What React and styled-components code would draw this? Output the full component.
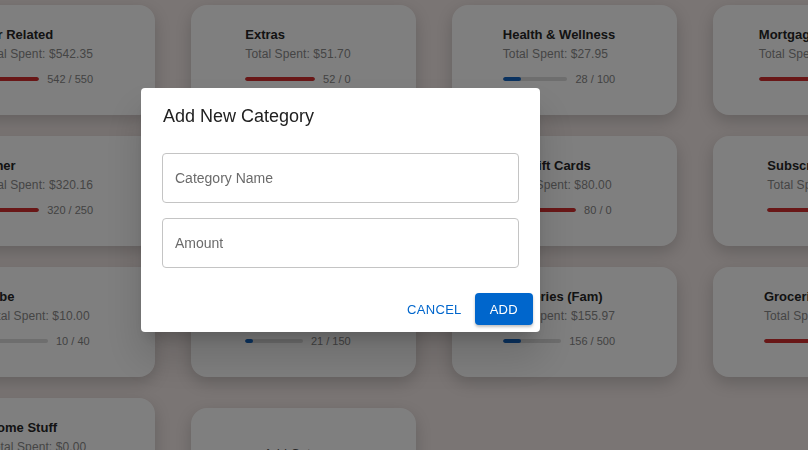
import React from "react";
import styled, { createGlobalStyle } from "styled-components";

const GlobalStyle = createGlobalStyle`
    html, body {
        margin: 0;
        padding: 0;
        background: #f4eae8;
        overflow: hidden;
        font-family: "Liberation Sans", Arial, sans-serif;
    }
`;

const Page = styled.div`
    width: 808px;
    height: 450px;
    overflow: hidden;
`;

const Grid = styled.div`
    display: grid;
    grid-template-columns: repeat(4, 225px);
    column-gap: 36px;
    row-gap: 21px;
    margin-left: -70px;
    padding-top: 5px;
`;

const Card = styled.div`
    height: 110px;
    box-sizing: border-box;
    background: #ffffff;
    border-radius: 16px;
    box-shadow: 0 6px 16px rgba(0, 0, 0, 0.18);
    display: flex;
    justify-content: center;
    padding: 22px 11px 0 0;
`;

const Content = styled.div`
    display: flex;
    flex-direction: column;
`;

const Title = styled.div`
    font-size: 13px;
    font-weight: bold;
    line-height: 16px;
    color: #262626;
    white-space: nowrap;
`;

const Spent = styled.div`
    margin-top: 3px;
    font-size: 12px;
    line-height: 16px;
    color: #8a8a8a;
    letter-spacing: 0.1px;
    white-space: nowrap;
`;

const ProgressRow = styled.div`
    margin-top: 9px;
    display: flex;
    align-items: center;
    gap: 8px;
    height: 16px;
`;

const Track = styled.div`
    flex: 1;
    height: 4px;
    border-radius: 2px;
    background: #dcdcdc;
    overflow: hidden;
`;

const Fill = styled.div`
    height: 100%;
    border-radius: 2px;
    background: ${(p) => (p.$over ? "#d32f2f" : "#1565c0")};
`;

const Count = styled.span`
    font-size: 11px;
    color: #858585;
    white-space: nowrap;
`;

const AddCard = styled(Card)`
    margin-top: 10px;
    padding: 38px 0 0 0;
    font-size: 13px;
    color: #555;
`;

const Overlay = styled.div`
    position: fixed;
    inset: 0;
    background: rgba(0, 0, 0, 0.5);
`;

const Dialog = styled.div`
    position: absolute;
    left: 141px;
    top: 88px;
    width: 399px;
    background: #ffffff;
    border-radius: 4px;
    box-shadow: 0 11px 15px -7px rgba(0, 0, 0, 0.2), 0 24px 38px 3px rgba(0, 0, 0, 0.14);
    display: flex;
    flex-direction: column;
`;

const DialogTitle = styled.h2`
    margin: 0;
    padding: 16px 22px;
    font-size: 18px;
    font-weight: normal;
    line-height: 24px;
    color: #212121;
`;

const DialogBody = styled.div`
    display: flex;
    flex-direction: column;
    gap: 15px;
    padding: 9px 21px 18px 21px;
`;

const Field = styled.input`
    height: 50px;
    box-sizing: border-box;
    border: 1px solid #c4c4c4;
    border-radius: 4px;
    padding: 0 12px;
    font-family: "Liberation Sans", Arial, sans-serif;
    font-size: 14px;
    color: #212121;
    outline: none;
    &::placeholder {
        color: #6b6b6b;
    }
`;

const Actions = styled.div`
    display: flex;
    justify-content: flex-end;
    align-items: center;
    gap: 9px;
    padding: 7px 7px 7px 8px;
`;

const Button = styled.button`
    height: 32px;
    padding: 0 ${(p) => (p.$primary ? "15px" : "4px")};
    border: none;
    border-radius: 4px;
    font-family: "Liberation Sans", Arial, sans-serif;
    font-size: 13px;
    letter-spacing: 0.3px;
    text-transform: uppercase;
    cursor: pointer;
    background: ${(p) => (p.$primary ? "#0066cc" : "transparent")};
    color: ${(p) => (p.$primary ? "#ffffff" : "#0066cc")};
    box-shadow: ${(p) =>
        p.$primary ? "0 2px 3px rgba(0,0,0,0.25)" : "none"};
`;

const categories = [
    { name: "Car Related", spent: "542.35", used: 542, budget: 550 },
    { name: "Extras", spent: "51.70", used: 52, budget: 0 },
    { name: "Health & Wellness", spent: "27.95", used: 28, budget: 100 },
    { name: "Mortgage", spent: "2,450.00", used: 2450, budget: 2400 },
    { name: "Other", spent: "320.16", used: 320, budget: 250 },
    { name: "Dining Out", spent: "64.20", used: 64, budget: 120 },
    { name: "My Gift Cards", spent: "80.00", used: 80, budget: 0 },
    { name: "Subscriptions", spent: "45.99", used: 46, budget: 40 },
    { name: "Tube", spent: "10.00", used: 10, budget: 40 },
    { name: "Entertainment", spent: "20.75", used: 21, budget: 150 },
    { name: "Groceries (Fam)", spent: "155.97", used: 156, budget: 500 },
    { name: "Groceries", spent: "212.40", used: 212, budget: 200 },
    { name: "Home Stuff", spent: "0.00", used: 0, budget: 50 },
];

const CategoryCard = ({ item }) => {
    const ratio = item.budget > 0 ? item.used / item.budget : 1;
    const over = ratio >= 0.9;
    const pct = Math.min(ratio, 1) * 100;
    return (
        <Card>
            <Content>
                <Title>{item.name}</Title>
                <Spent>Total Spent: ${item.spent}</Spent>
                <ProgressRow>
                    <Track>
                        <Fill $over={over} style={{ width: `${over ? 100 : pct}%` }} />
                    </Track>
                    <Count>
                        {item.used} / {item.budget}
                    </Count>
                </ProgressRow>
            </Content>
        </Card>
    );
};

const App = () => {
    return (
        <>
            <GlobalStyle />
            <Page>
                <Grid>
                    {categories.map((c) => (
                        <CategoryCard key={c.name} item={c} />
                    ))}
                    <AddCard>Add Category</AddCard>
                </Grid>
            </Page>
            <Overlay>
                <Dialog>
                    <DialogTitle>Add New Category</DialogTitle>
                    <DialogBody>
                        <Field placeholder="Category Name" />
                        <Field placeholder="Amount" />
                    </DialogBody>
                    <Actions>
                        <Button>Cancel</Button>
                        <Button $primary>Add</Button>
                    </Actions>
                </Dialog>
            </Overlay>
        </>
    );
};

export default App;
